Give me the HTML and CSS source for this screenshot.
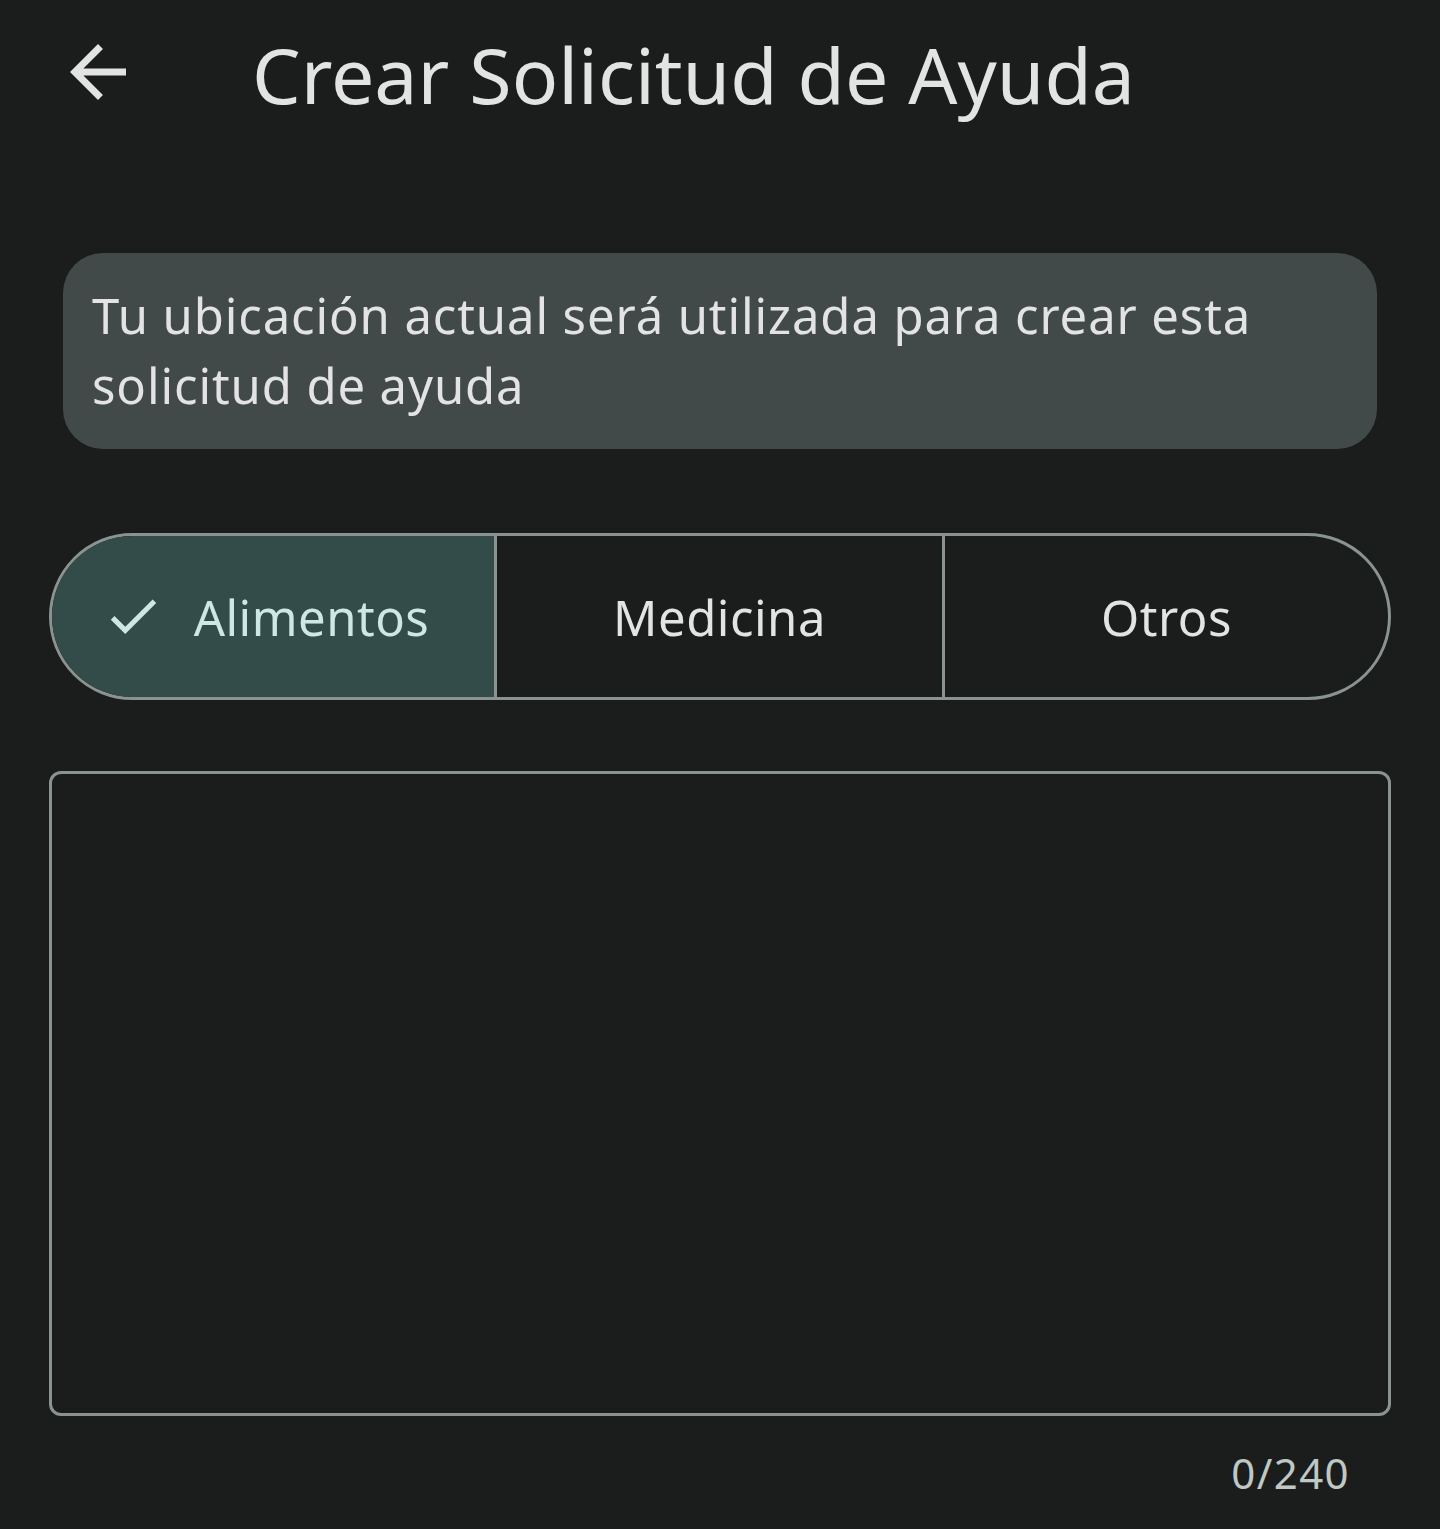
FILE: index.html
```html
<!DOCTYPE html>
<html lang="es">
<head>
<meta charset="utf-8">
<link rel="stylesheet" href="styles.css">
</head>
<body>
<div class="screen">
  <header class="topbar">
    <button class="back" aria-label="Atrás">
      <svg width="84" height="84" viewBox="0 0 24 24"><path d="M20 11H7.83l5.59-5.59L12 4l-8 8 8 8 1.41-1.41L7.83 13H20v-2z" fill="#e2e3e2"/></svg>
    </button>
    <h1 class="title">Crear Solicitud de Ayuda</h1>
  </header>
  <main class="content">
    <div class="info">Tu ubicación actual será utilizada para crear esta solicitud de ayuda</div>
    <div class="segmented">
      <div class="seg selected">
        <svg class="check" width="62" height="62" viewBox="0 0 24 24"><path d="M9 16.17L4.83 12l-1.42 1.41L9 19 21 7l-1.41-1.41z" fill="#cde8e3"/></svg>
        <span>Alimentos</span>
      </div>
      <div class="seg"><span>Medicina</span></div>
      <div class="seg"><span>Otros</span></div>
    </div>
    <div class="field"></div>
    <div class="counter">0/240</div>
  </main>
</div>
</body>
</html>
```
FILE: styles.css
```css
html, body {
  margin: 0;
  padding: 0;
  background: #1b1d1c;
}
body {
  font-family: "Noto Sans", "Open Sans", sans-serif;
  color: #e2e3e2;
}
.screen {
  width: 1440px;
  height: 1529px;
  overflow: hidden;
}
.topbar {
  display: flex;
  align-items: center;
  height: 152px;
}
.back {
  background: none;
  border: none;
  padding: 0;
  margin-left: 56px;
  width: 84px;
  height: 84px;
  display: flex;
  align-items: center;
  justify-content: center;
  margin-top: -8px;
}
.title {
  margin: -4px 0 0 112px;
  font-weight: 400;
  font-size: 77px;
  line-height: 1;
  color: #e2e3e2;
}
.content {
  padding: 101px 49px 0 49px;
}
.info {
  margin: 0 14px;
  background: #414a49;
  border-radius: 40px;
  padding: 27px 29px 29px;
  font-size: 49px;
  line-height: 70px;
  color: #e2e3e2;
  letter-spacing: 0.9px;
}
.segmented {
  margin-top: 84px;
  height: 167px;
  box-sizing: border-box;
  border: 3px solid #8a9390;
  border-radius: 84px;
  display: grid;
  grid-template-columns: 442fr 448fr 446fr;
  overflow: hidden;
}
.seg {
  min-width: 0;
  display: flex;
  align-items: center;
  justify-content: center;
  font-size: 49px;
  color: #e2e3e2;
  letter-spacing: 0.5px;
}
.seg + .seg {
  border-left: 3px solid #8a9390;
}
.seg.selected {
  background: #334b49;
  color: #cde8e3;
  gap: 30px;
  padding-right: 15px;
}
.check {
  margin-top: -2px;
}
.field {
  margin-top: 71px;
  height: 645px;
  box-sizing: border-box;
  border: 3px solid #8a9390;
  border-radius: 12px;
}
.counter {
  text-align: right;
  padding-right: 41px;
  margin-top: 28px;
  font-size: 42px;
  color: #bfc8c5;
  letter-spacing: 1.4px;
}
```
